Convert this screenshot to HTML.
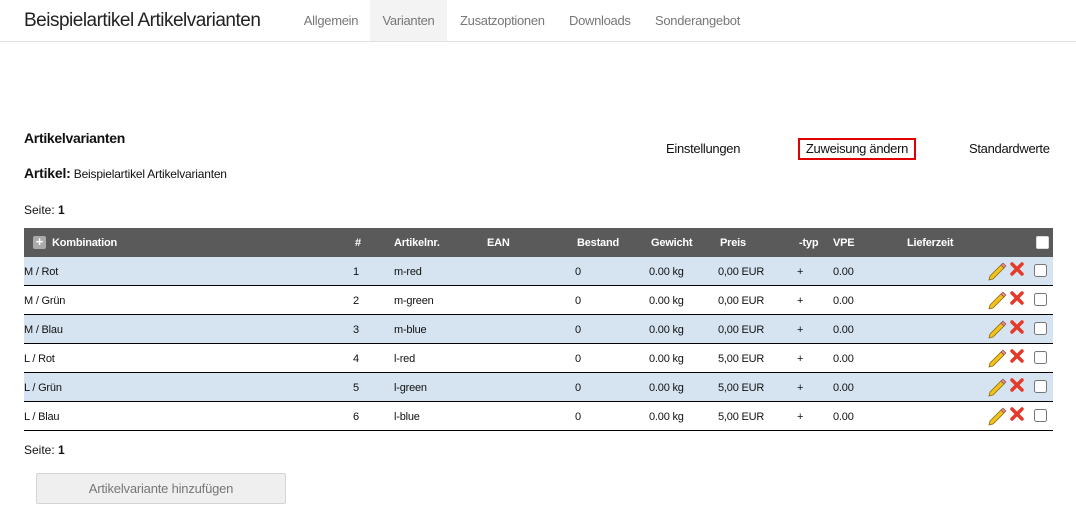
<!DOCTYPE html>
<html><head><meta charset="utf-8"><style>
*{margin:0;padding:0;box-sizing:border-box}
body{width:1076px;height:522px;background:#fff;font-family:"Liberation Sans",Arial,sans-serif;color:#111;position:relative;overflow:hidden}
.a{position:absolute;white-space:nowrap}
.top{position:absolute;left:0;top:0;width:1076px;height:42px;border-bottom:1px solid #e2e2e2}
.tab{position:absolute;top:0;height:41px;line-height:42px;font-size:13px;color:#777;letter-spacing:-0.3px}
.hdr{position:absolute;left:24px;top:228px;width:1029px;height:29px;background:#5a5a5a;color:#fff;font-size:11px;font-weight:bold;letter-spacing:-0.2px}
.hdr span{position:absolute;top:9px}
.row{position:absolute;left:24px;width:1029px;height:29px;border-bottom:1px solid #000;font-size:11px;letter-spacing:-0.2px}
.row span{position:absolute;top:9px}
.b{background:#d6e4f1}
.cb{position:absolute;width:13px;height:13px;border:1px solid #777;background:#fff;border-radius:2px}
</style></head><body>
<div class="top">
<div class="a" style="left:24px;top:10px;font-size:19px;color:#222;letter-spacing:-0.5px">Beispielartikel Artikelvarianten</div>
<div class="tab" style="left:293px;width:76px;text-align:center">Allgemein</div>
<div class="tab" style="left:370px;width:77px;background:#f3f3f3;text-align:center">Varianten</div>
<div class="tab" style="left:460px">Zusatzoptionen</div>
<div class="tab" style="left:569px">Downloads</div>
<div class="tab" style="left:655px">Sonderangebot</div>
</div>
<div class="a" style="left:24px;top:130px;font-size:14px;font-weight:bold;letter-spacing:-0.3px">Artikelvarianten</div>
<div class="a" style="left:666px;top:141px;font-size:13px;letter-spacing:-0.3px">Einstellungen</div>
<div class="a" style="left:798px;top:138px;width:118px;height:22px;border:2px solid #e00000;font-size:13px;line-height:18px;text-align:center;letter-spacing:-0.3px">Zuweisung ändern</div>
<div class="a" style="left:969px;top:141px;font-size:13px;letter-spacing:-0.3px">Standardwerte</div>
<div class="a" style="left:24px;top:165px;font-size:12px;letter-spacing:-0.2px"><b style="font-size:14px">Artikel:</b> Beispielartikel Artikelvarianten</div>
<div class="a" style="left:24px;top:203px;font-size:12px">Seite: <b>1</b></div>
<div class="hdr">
<div style="position:absolute;left:9px;top:8px;width:13px;height:13px;background:#aaa;border-radius:2px;color:#fff;font-size:13px;line-height:12px;text-align:center">+</div>
<span style="left:28px">Kombination</span><span style="left:331px">#</span><span style="left:370px">Artikelnr.</span><span style="left:463px">EAN</span><span style="left:553px">Bestand</span><span style="left:627px">Gewicht</span><span style="left:696px">Preis</span><span style="left:775px">-typ</span><span style="left:809px">VPE</span><span style="left:883px">Lieferzeit</span>
<div class="cb" style="left:1012px;top:8px;border-color:#ddd"></div>
</div>
<div class="row b" style="top:257px"><span style="left:0">M / Rot</span><span style="left:329px">1</span><span style="left:370px">m-red</span><span style="left:551px">0</span><span style="left:625px">0.00 kg</span><span style="left:694px">0,00 EUR</span><span style="left:773px">+</span><span style="left:809px">0.00</span></div>
<div class="row" style="top:286px"><span style="left:0">M / Grün</span><span style="left:329px">2</span><span style="left:370px">m-green</span><span style="left:551px">0</span><span style="left:625px">0.00 kg</span><span style="left:694px">0,00 EUR</span><span style="left:773px">+</span><span style="left:809px">0.00</span></div>
<div class="row b" style="top:315px"><span style="left:0">M / Blau</span><span style="left:329px">3</span><span style="left:370px">m-blue</span><span style="left:551px">0</span><span style="left:625px">0.00 kg</span><span style="left:694px">0,00 EUR</span><span style="left:773px">+</span><span style="left:809px">0.00</span></div>
<div class="row" style="top:344px"><span style="left:0">L / Rot</span><span style="left:329px">4</span><span style="left:370px">l-red</span><span style="left:551px">0</span><span style="left:625px">0.00 kg</span><span style="left:694px">5,00 EUR</span><span style="left:773px">+</span><span style="left:809px">0.00</span></div>
<div class="row b" style="top:373px"><span style="left:0">L / Grün</span><span style="left:329px">5</span><span style="left:370px">l-green</span><span style="left:551px">0</span><span style="left:625px">0.00 kg</span><span style="left:694px">5,00 EUR</span><span style="left:773px">+</span><span style="left:809px">0.00</span></div>
<div class="row" style="top:402px"><span style="left:0">L / Blau</span><span style="left:329px">6</span><span style="left:370px">l-blue</span><span style="left:551px">0</span><span style="left:625px">0.00 kg</span><span style="left:694px">5,00 EUR</span><span style="left:773px">+</span><span style="left:809px">0.00</span></div>
<svg class="a" style="left:0;top:0" width="1076" height="522">
<defs><g id="ic">
<path d="M990 276 L1001 265 L1004 268 L993 279 L989 280 Z" fill="#f2c21b" stroke="#8a6a10" stroke-width="0.8"/>
<path d="M1001 265 L1003 263 L1006 266 L1004 268 Z" fill="#e88" stroke="#844" stroke-width="0.6"/>
<path d="M1012 264 L1022 274 M1022 264 L1012 274" stroke="#e33a2a" stroke-width="3.5" stroke-linecap="round"/>
<rect x="1034.5" y="264.5" width="12" height="12" rx="2" fill="#fff" stroke="#777"/>
</g></defs>
<use href="#ic"/><use href="#ic" y="29"/><use href="#ic" y="58"/><use href="#ic" y="87"/><use href="#ic" y="116"/><use href="#ic" y="145"/>
</svg>
<div class="a" style="left:24px;top:443px;font-size:12px">Seite: <b>1</b></div>
<div class="a" style="left:36px;top:473px;width:250px;height:31px;background:#efefef;border:1px solid #d4d4d4;border-radius:2px;color:#777;font-size:13px;line-height:29px;text-align:center;letter-spacing:-0.2px">Artikelvariante hinzufügen</div>
</body></html>
